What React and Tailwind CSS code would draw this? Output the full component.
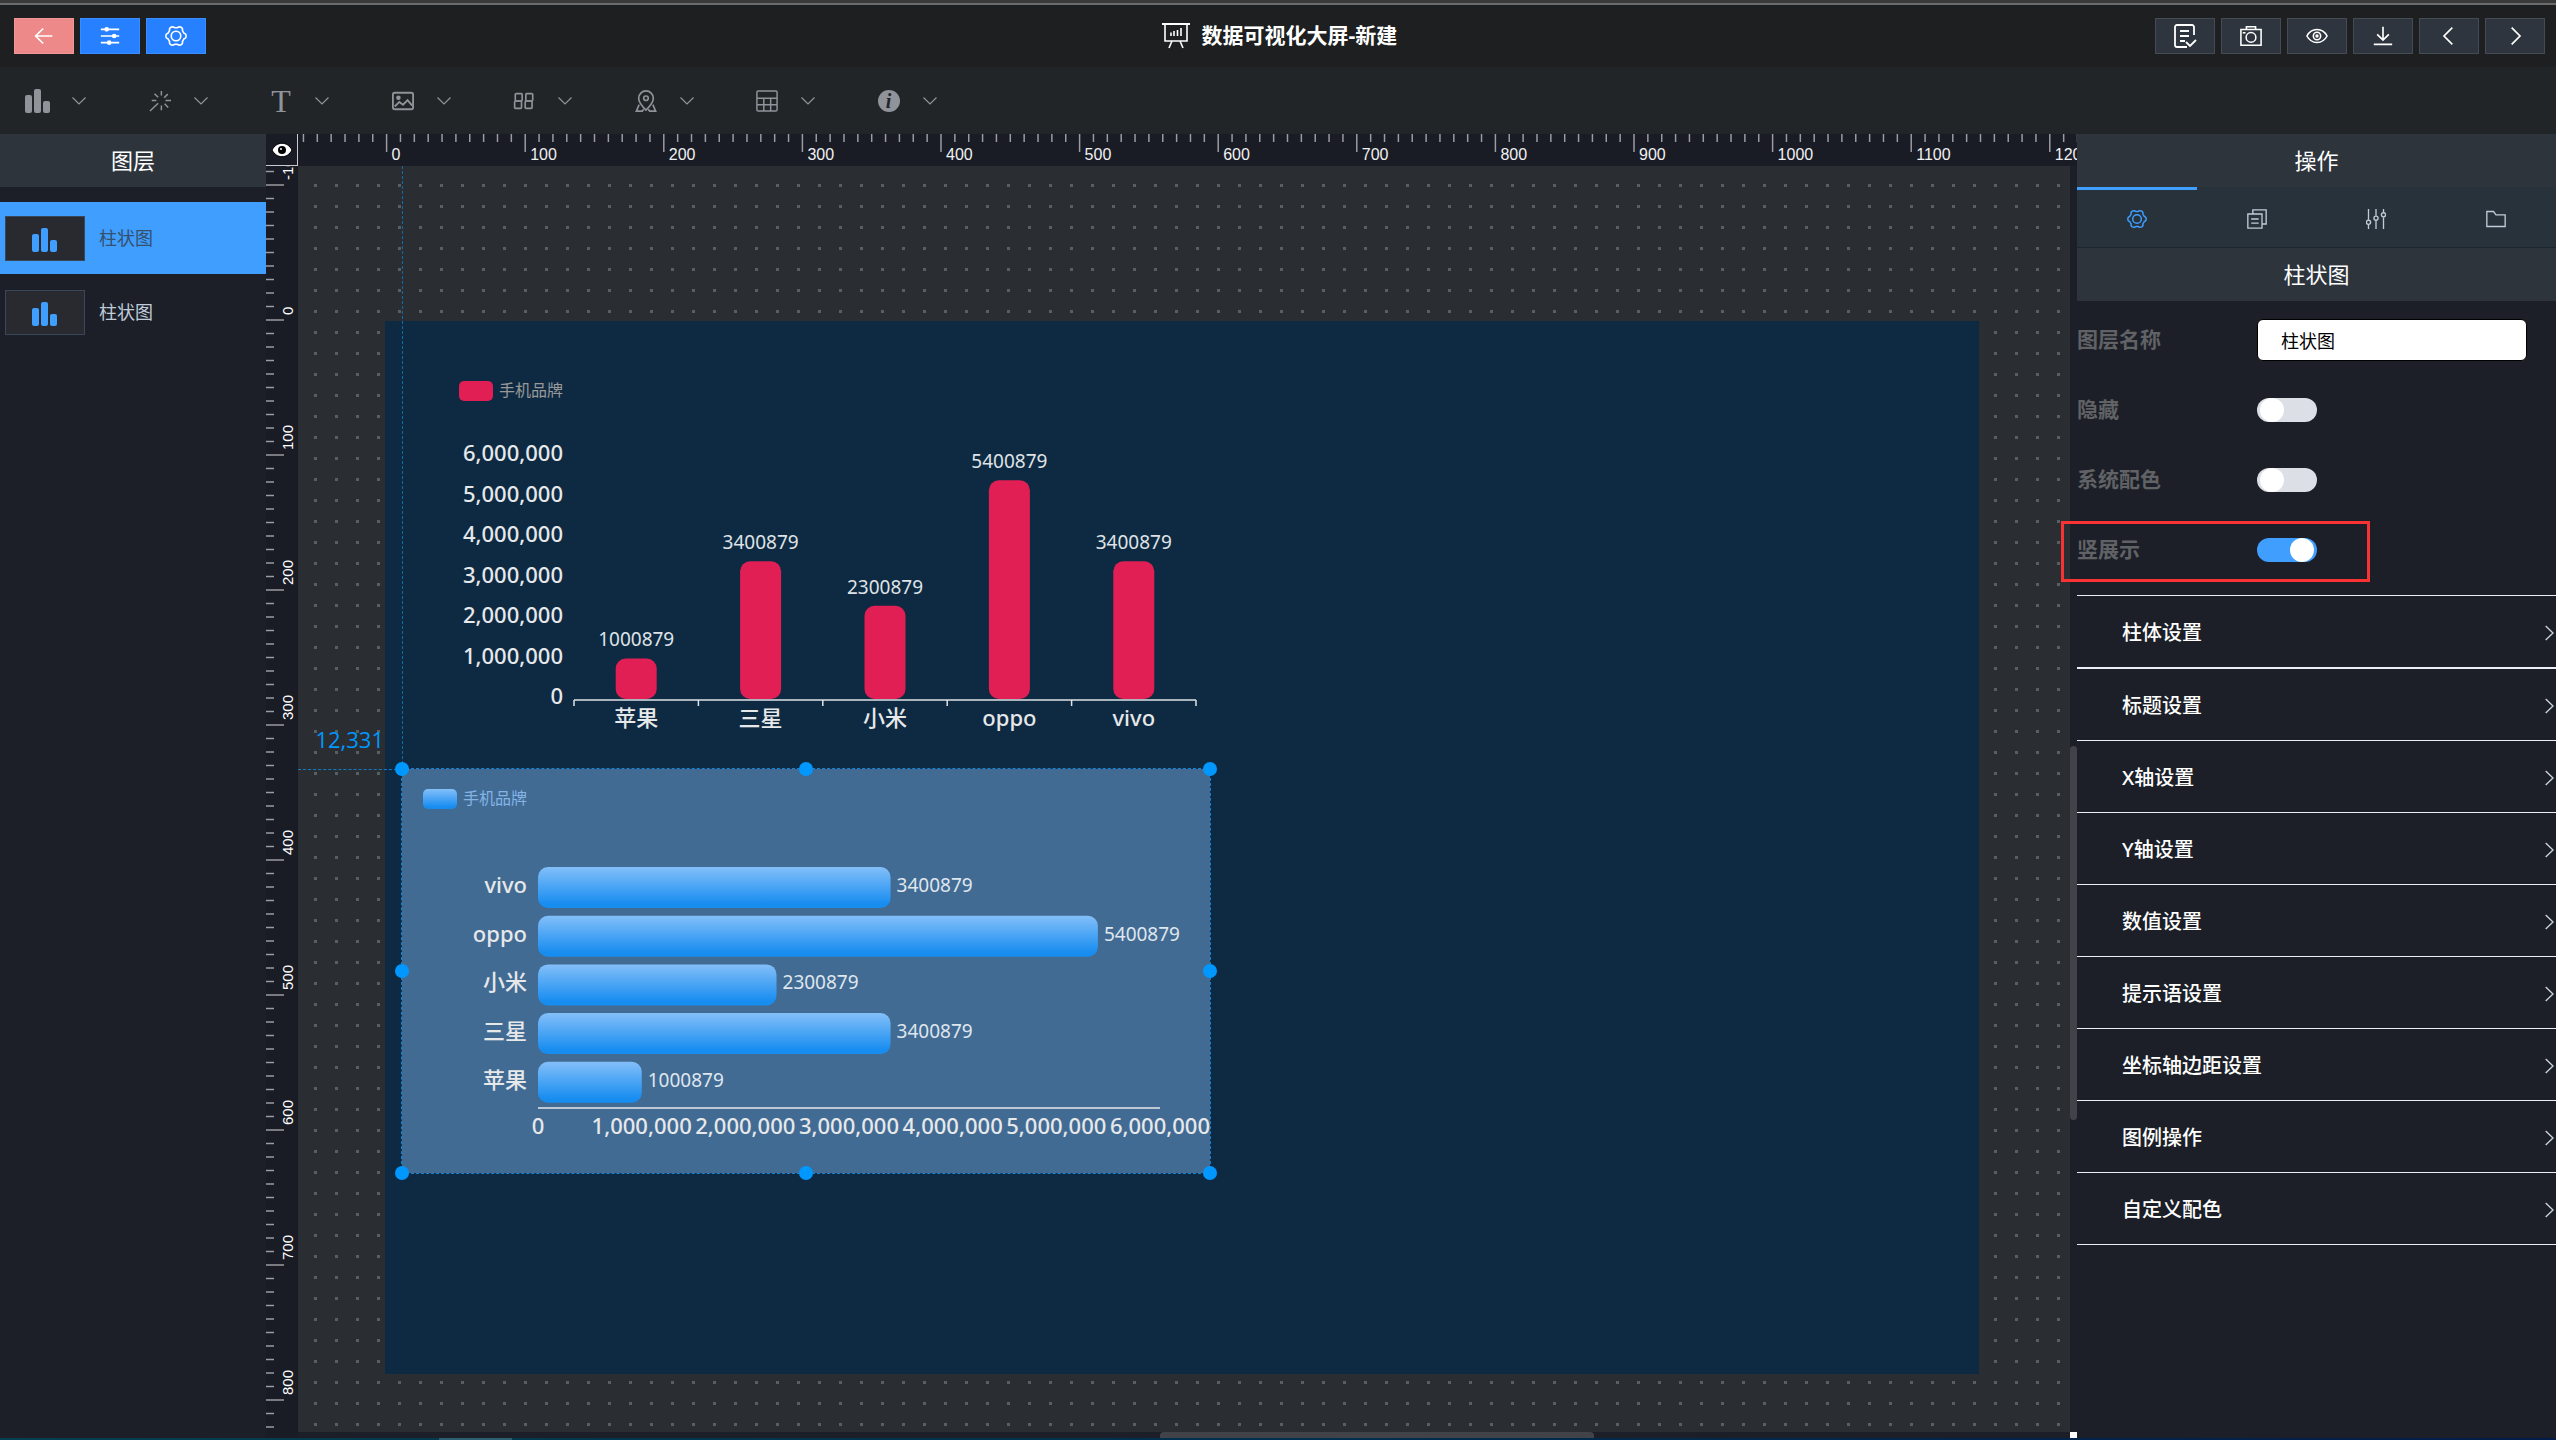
import React, { useState } from 'react';
import clsx from 'clsx';

const CHART_DATA = [
  { name: '苹果', value: 1000879 },
  { name: '三星', value: 3400879 },
  { name: '小米', value: 2300879 },
  { name: 'oppo', value: 5400879 },
  { name: 'vivo', value: 3400879 },
];
const AXIS_MAX = 6000000;
const AXIS_STEPS = [0, 1000000, 2000000, 3000000, 4000000, 5000000, 6000000];

const LAYERS = [
  { id: 'bar-h', name: '柱状图' },
  { id: 'bar-v', name: '柱状图' },
];

const SECTIONS = [
  '柱体设置',
  '标题设置',
  'X轴设置',
  'Y轴设置',
  '数值设置',
  '提示语设置',
  '坐标轴边距设置',
  '图例操作',
  '自定义配色',
];

// ---------- icons ----------

const Icon = ({ size = 22, width = 1.5, viewBox = '0 0 24 24', className, children }) => (
  <svg
    width={size}
    height={size}
    viewBox={viewBox}
    className={className}
    fill="none"
    stroke="currentColor"
    strokeWidth={width}
    aria-hidden="true"
  >
    {children}
  </svg>
);

// six flat teeth around the hub
const gearPath = (() => {
  const points = [];
  for (let i = 0; i < 96; i++) {
    const a = (i / 96) * Math.PI * 2;
    const r = 10 + Math.tanh(Math.cos(6 * a) * 1.8);
    points.push(`${(12 + r * Math.cos(a)).toFixed(2)} ${(12 + r * Math.sin(a)).toFixed(2)}`);
  }
  return `M${points.join('L')}Z`;
})();

const GearIcon = (props) => (
  <Icon {...props}>
    <path d={gearPath} />
    <circle cx="12" cy="12" r="5.2" />
  </Icon>
);

const BackIcon = () => (
  <Icon size={20} width={2}>
    <path d="M11 3 2 12l9 9M2 12h20" />
  </Icon>
);

const SlidersIcon = () => (
  <Icon size={20} width={2}>
    <path d="M1 4h22M1 12h22M1 20h22" />
    <g fill="currentColor" stroke="none">
      <circle cx="8" cy="4" r="2.8" />
      <circle cx="17" cy="12" r="2.8" />
      <circle cx="11" cy="20" r="2.8" />
    </g>
  </Icon>
);

const BoardIcon = () => (
  <Icon size={28} width={1.6} viewBox="0 0 28 28">
    <path d="M0 2h28" strokeWidth="2" />
    <path d="M3 2v17h22V2M10 19l-3 7M18 19l3 7" />
    <path d="M9 10.500V14M12 9v5M15.500 8v6M19 6v8" />
  </Icon>
);

const SaveIcon = () => (
  <Icon size={24} width={1.8}>
    <path d="M21 11V3a2 2 0 0 0-2-2H4a2 2 0 0 0-2 2v18a2 2 0 0 0 2 2h10" />
    <path d="M7 7h9M7 12h9M7 17h5M13 18l4 4 6-6" />
  </Icon>
);

const CameraIcon = () => (
  <Icon size={22} width={1.7}>
    <path d="M1 5h22v17H1zM7 5V2h10v3" />
    <circle cx="12" cy="13.5" r="5.3" />
    <path d="M3 8.500h3" />
  </Icon>
);

const EyeIcon = () => (
  <Icon size={22} width={1.7}>
    <path d="M1 12c2.500-4.700 6.300-7 11-7s8.500 2.300 11 7c-2.500 4.700-6.300 7-11 7s-8.500-2.300-11-7z" />
    <circle cx="12" cy="12" r="4" />
    <circle cx="12" cy="12" r="1" />
  </Icon>
);

const DownloadIcon = () => (
  <Icon size={20} width={2}>
    <path d="M12 1v15M5 10l7 7 7-7M1 22h22" />
  </Icon>
);

const PrevIcon = () => (
  <Icon size={20} width={2}>
    <path d="M16 2 6 12l10 10" />
  </Icon>
);

const NextIcon = () => (
  <Icon size={20} width={2}>
    <path d="m8 2 10 10L8 22" />
  </Icon>
);

const BarsIcon = ({ className }) => (
  <svg width="26" height="24" viewBox="0 0 26 24" fill="currentColor" className={className} aria-hidden="true">
    <rect x="0" y="6" width="7" height="18" rx="2" />
    <rect x="9" y="0" width="7" height="24" rx="2" />
    <rect x="18" y="12" width="7" height="12" rx="2" />
  </svg>
);

const WandIcon = () => (
  <Icon size={22} width={1.6}>
    <path d="M1 23l9-8.500M13.500 1v5M13.500 17v5M3 11.500h5M18 11.500h6M6 4l4 4M20.500 4.500l-4 4M17 15l4 4" />
  </Icon>
);

const TextIcon = () => (
  <span className="font-['Liberation_Serif',serif] text-[32px] leading-none" aria-hidden="true">
    T
  </span>
);

const PictureIcon = () => (
  <Icon size={22} width={2}>
    <rect x="1" y="3" width="22" height="18" rx="2" />
    <circle cx="7" cy="8.500" r="1.500" fill="currentColor" />
    <path d="m3 18 5-5 4 3 5-5 5 6" />
  </Icon>
);

const DigitsIcon = () => (
  <Icon size={22} width={1.8}>
    <rect x="2.500" y="4" width="7.500" height="8" rx="1" />
    <rect x="1.800" y="12" width="7.500" height="8" rx="1" />
    <rect x="14" y="4" width="7.500" height="8" rx="1" />
    <rect x="13.300" y="12" width="7.500" height="8" rx="1" />
  </Icon>
);

const MapIcon = () => (
  <Icon size={22} width={1.8}>
    <path d="M12 22C6.500 16.500 4 13 4 9a8 8 0 0 1 16 0c0 4-2.500 7.500-8 13z" />
    <circle cx="12" cy="9" r="2.500" />
    <path d="M4.500 16 1.500 23H8l1.500-2M19.500 16l3 7H16l-1.500-2" />
  </Icon>
);

const TableIcon = () => (
  <Icon size={22} width={1.6}>
    <rect x="1" y="1" width="22" height="22" rx="1.500" />
    <path d="M1 9h22M1 16h22M8.500 9v14M16 9v14" />
  </Icon>
);

const InfoIcon = () => (
  <span
    className="flex size-[22px] items-center justify-center rounded-full bg-[#909399] font-['Liberation_Serif',serif] text-xl leading-none font-bold text-[#222528] italic"
    aria-hidden="true"
  >
    i
  </span>
);

const DownIcon = () => (
  <svg width="14" height="8" viewBox="0 0 14 8" fill="none" stroke="currentColor" strokeWidth="1.200" aria-hidden="true">
    <path d="m.5.5 6.500 6.500 6.500-6.500" />
  </svg>
);

const CopyIcon = () => (
  <Icon size={20} width={1.6}>
    <path d="M1 6h17v17H1zM7 6V1h16v17h-5M5 12h9M5 17h9" />
  </Icon>
);

const TuneIcon = () => (
  <Icon size={20} width={1.6}>
    <path d="M3 0v13M3 18v6M12 0v8M12 14v10M21 0v4M21 10v14" />
    <circle cx="3" cy="16" r="2.500" />
    <circle cx="12" cy="11" r="2.500" />
    <circle cx="21" cy="7" r="2.500" />
  </Icon>
);

const FolderIcon = () => (
  <Icon size={20} width={1.6}>
    <path d="M1 3h8l3 4h11v14H1z" />
  </Icon>
);

const RulerEyeIcon = () => (
  <svg width="22" height="16" viewBox="0 0 22 16" aria-hidden="true">
    <path d="M1 8c2.500-4.500 5.800-6.700 10-6.700S18.500 3.500 21 8c-2.500 4.500-5.800 6.700-10 6.700S3.500 12.500 1 8z" fill="#fff" stroke="#000" />
    <circle cx="11" cy="8" r="4" fill="#000" />
    <circle cx="10" cy="7" r="1" fill="#fff" />
  </svg>
);

// ---------- top bars ----------

const HeaderButton = ({ label, className, children }) => (
  <button
    type="button"
    aria-label={label}
    className={clsx('flex h-9 w-[60px] items-center justify-center border text-white', className)}
  >
    {children}
  </button>
);

const Header = () => {
  const blue = 'bg-[#2680ff] border-[#3a8cff]';
  const dark = 'bg-[#2e353f] border-[#454a54]';

  return (
    <header className="grid h-[62px] shrink-0 grid-cols-[1fr_auto_1fr] items-center bg-[#1e1f20] pr-[11px] pl-3.5">
      <div className="flex gap-1.5">
        <HeaderButton label="返回" className="border-[#f19696] bg-[#ed8a89]"><BackIcon /></HeaderButton>
        <HeaderButton label="图层" className={blue}><SlidersIcon /></HeaderButton>
        <HeaderButton label="设置" className={blue}><GearIcon width={1.8} /></HeaderButton>
      </div>
      <h1 className="flex items-center gap-3 text-[21px] font-bold text-white">
        <BoardIcon />
        数据可视化大屏-新建
      </h1>
      <div className="flex justify-end gap-1.5">
        <HeaderButton label="保存" className={dark}><SaveIcon /></HeaderButton>
        <HeaderButton label="截图" className={dark}><CameraIcon /></HeaderButton>
        <HeaderButton label="预览" className={dark}><EyeIcon /></HeaderButton>
        <HeaderButton label="导出" className={dark}><DownloadIcon /></HeaderButton>
        <HeaderButton label="撤销" className={dark}><PrevIcon /></HeaderButton>
        <HeaderButton label="恢复" className={dark}><NextIcon /></HeaderButton>
      </div>
    </header>
  );
};

const TOOLS = [
  { label: '图表', icon: BarsIcon },
  { label: '装饰', icon: WandIcon },
  { label: '文本', icon: TextIcon },
  { label: '图片', icon: PictureIcon },
  { label: '数字', icon: DigitsIcon },
  { label: '地图', icon: MapIcon },
  { label: '表格', icon: TableIcon },
  { label: '信息', icon: InfoIcon },
];

const Toolbar = () => (
  <nav className="h-[67px] shrink-0 bg-[#222528] text-[#909399]">
    <div className="grid h-full w-[972px] grid-cols-8">
      {TOOLS.map(({ label, icon: ToolIcon }) => (
        <button key={label} type="button" aria-label={label} className="flex items-center gap-5 pl-6">
          <span className="flex w-7 justify-center"><ToolIcon /></span>
          <DownIcon />
        </button>
      ))}
    </div>
  </nav>
);

// ---------- left panel ----------

const PanelTitle = ({ children }) => (
  <h2 className="flex h-[53px] shrink-0 items-center justify-center bg-[#2d343c] text-[22px] text-white">
    {children}
  </h2>
);

const LayerPanel = ({ active, onSelect }) => (
  <aside className="w-[266px] shrink-0 bg-[#1c1f27]">
    <PanelTitle>图层</PanelTitle>
    <ul className="mt-[15px] flex flex-col gap-0.5">
      {LAYERS.map((layer) => (
        <li key={layer.id}>
          <button
            type="button"
            onClick={() => onSelect(layer.id)}
            className={clsx(
              'flex h-[72px] w-full items-center gap-3.5 pl-[5px] text-lg',
              active === layer.id ? 'bg-[#409eff] text-[#34506e]' : 'text-[#bfcbd9]'
            )}
          >
            <span className="flex h-[45px] w-20 items-center justify-center border border-[#3a4659] bg-[#282a30] text-[#409eff]">
              <BarsIcon className="mt-1" />
            </span>
            {layer.name}
          </button>
        </li>
      ))}
    </ul>
  </aside>
);

// ---------- rulers ----------

const range = (from, to) => Array.from({ length: to - from + 1 }, (_, i) => from + i);

const TopRuler = () => (
  <svg className="h-8 min-w-0 flex-1 bg-[#191b25] font-['Liberation_Sans',sans-serif]" aria-hidden="true">
    {range(-6, 122).map((n) => {
      const x = 88.6 + n * 13.86;
      const major = n % 10 === 0;
      return (
        <g key={n}>
          <line x1={x} x2={x} y1="0" y2={major ? 18 : 8} stroke="#9a9ca1" strokeWidth="1.500" />
          {major && (
            <text x={x + 5} y="26" fontSize="16" fill="#f0f1f2">
              {n * 10}
            </text>
          )}
        </g>
      );
    })}
  </svg>
);

const SideRuler = () => (
  <svg className="h-full w-8 shrink-0 bg-[#191b25] font-['Liberation_Sans',sans-serif]" aria-hidden="true">
    {range(-11, 82).map((n) => {
      const y = 154 + n * 13.5;
      const major = n % 10 === 0;
      return (
        <g key={n}>
          <line x1="0" x2={major ? 18 : 8} y1={y} y2={y} stroke="#9a9ca1" strokeWidth="1.500" />
          {major && (
            <text transform={`translate(27 ${y - 5}) rotate(-90)`} fontSize="15" fill="#fff">
              {n * 10}
            </text>
          )}
        </g>
      );
    })}
  </svg>
);

// ---------- charts ----------

const CHART_FONT = "font-['Noto_Sans','Noto_Sans_CJK_SC',sans-serif]";
const LEFT = 136;
const RIGHT = 758;
const BASE = 338;

const ColumnChart = () => {
  const step = (RIGHT - LEFT) / CHART_DATA.length;
  const height = (v) => (v / AXIS_MAX) * 243;

  return (
    <svg width="808" height="404" className={CHART_FONT}>
      <rect x="21" y="20" width="34" height="20" rx="5" fill="#e11f54" />
      <text x="61" y="35" fontSize="16" fill="#999">手机品牌</text>
      {AXIS_STEPS.map((v) => (
        <text key={v} x="125" y={BASE - height(v) + 5} fontSize="22" fontWeight="500" textAnchor="end" fill="#e6e8ea">
          {v.toLocaleString('en-US')}
        </text>
      ))}
      {CHART_DATA.map((d, i) => {
        const x = LEFT + step * (i + 0.5);
        const h = height(d.value);
        return (
          <g key={d.name} textAnchor="middle">
            <rect x={x - 20.5} y={BASE - h} width="41" height={h} rx="10" fill="#e11f54" />
            <text x={x} y={BASE - h - 12} fontSize="19" fill="#dfe3e7">{d.value}</text>
            <text x={x} y={BASE + 27} fontSize="22" fontWeight="500" fill="#e6e8ea">{d.name}</text>
          </g>
        );
      })}
      <g stroke="#dfe3e7" strokeWidth="1.500">
        <line x1={LEFT} x2={RIGHT} y1={BASE + 1} y2={BASE + 1} />
        {range(0, CHART_DATA.length).map((i) => (
          <line key={i} x1={LEFT + i * step} x2={LEFT + i * step} y1={BASE + 1} y2={BASE + 7} />
        ))}
      </g>
    </svg>
  );
};

const BarChart = () => {
  const step = 48.7;
  const width = (v) => (v / AXIS_MAX) * (RIGHT - LEFT);
  const rows = [...CHART_DATA].reverse();

  return (
    <svg width="808" height="404" className={CHART_FONT}>
      <defs>
        <linearGradient id="barFill" x1="0" y1="0" x2="0" y2="1">
          <stop offset="0" stopColor="#83bff9" />
          <stop offset="0.900" stopColor="#188df0" />
        </linearGradient>
      </defs>
      <rect x="21" y="20" width="34" height="20" rx="5" fill="url(#barFill)" />
      <text x="61" y="35" fontSize="16" fill="#83b4e6">手机品牌</text>
      {rows.map((d, i) => {
        const y = 98 + step * i;
        return (
          <g key={d.name}>
            <rect x={LEFT} y={y} width={width(d.value)} height="41" rx="10" fill="url(#barFill)" />
            <text x="125" y={y + 26} fontSize="22" fontWeight="500" textAnchor="end" fill="#e6e8ea">{d.name}</text>
            <text x={LEFT + width(d.value) + 6} y={y + 25} fontSize="19" fill="#dfe6ee">{d.value}</text>
          </g>
        );
      })}
      <line x1={LEFT} x2={RIGHT} y1={BASE + 1} y2={BASE + 1} stroke="#e6e8ea" strokeWidth="1.500" />
      {AXIS_STEPS.map((v) => (
        <text key={v} x={LEFT + width(v)} y="365" fontSize="22" fontWeight="500" textAnchor="middle" fill="#e6e8ea">
          {v.toLocaleString('en-US')}
        </text>
      ))}
    </svg>
  );
};

// ---------- stage ----------

const HANDLES = [
  'left-0 top-0',
  'left-1/2 top-0',
  'left-full top-0',
  'left-0 top-1/2',
  'left-full top-1/2',
  'left-0 top-full',
  'left-1/2 top-full',
  'left-full top-full',
];

const Stage = () => (
  <div className="absolute top-[155px] left-[87px] h-[1053px] w-[1594px] bg-[#0e2a42]">
    <div className="absolute top-10 left-[53px]">
      <ColumnChart />
    </div>

    {/* selected widget with its guides */}
    <div className="absolute top-[448px] left-[17px] bg-[#426b94] outline-1 outline-[#1583d4] outline-dashed">
      <span className="absolute bottom-full left-0 h-[603px] border-l border-dashed border-[#0f6cab]" />
      <span className="absolute top-0 right-full w-[104px] border-t border-dashed border-[#0f7cc4]" />
      <span className="absolute right-full bottom-full mr-[18px] mb-3.5 font-['Open_Sans',sans-serif] text-[22px] leading-8 text-[#0098ff]">
        12,331
      </span>
      <BarChart />
      {HANDLES.map((pos) => (
        <span key={pos} className={clsx('absolute size-3.5 -translate-1/2 rounded-full bg-[#0098ff]', pos)} />
      ))}
    </div>
  </div>
);

const Workspace = () => (
  <main className="flex min-w-0 flex-1 flex-col bg-[#1c1f27]">
    <div className="flex h-8 shrink-0">
      <button
        type="button"
        aria-label="显示标尺"
        className="flex w-8 shrink-0 items-center justify-center border-r border-b border-[#c9cacd] bg-[#191b25]"
      >
        <RulerEyeIcon />
      </button>
      <TopRuler />
    </div>
    <div className="flex min-h-0 flex-1">
      <SideRuler />
      <div className="flex min-w-0 flex-1 flex-col">
        <div className="flex min-h-0 flex-1">
          <div className="relative min-w-0 flex-1 overflow-hidden bg-[#2a2d31] bg-[radial-gradient(#566064_1.500px,transparent_2px)] bg-[length:21px_21px] bg-[position:7px_9px]">
            <Stage />
          </div>
          <div className="w-[7px] shrink-0 pt-[580px]">
            <div className="h-[374px] rounded-full bg-[#414349]" />
          </div>
        </div>
        <div className="flex h-1.5 shrink-0 justify-between pl-[862px]">
          <div className="w-[434px] rounded-t bg-[#414349]" />
          <div className="w-[7px] bg-white" />
        </div>
      </div>
    </div>
  </main>
);

// ---------- right panel ----------

const TABS = [
  { label: '基础', icon: () => <GearIcon size={20} width={1.8} /> },
  { label: '数据', icon: CopyIcon },
  { label: '交互', icon: TuneIcon },
  { label: '资源', icon: FolderIcon },
];

const FormRow = ({ id, label, children }) => (
  <div className="relative flex h-[42px] items-center">
    <label htmlFor={id} className="w-[180px] shrink-0 text-[21px] font-bold text-[#606266]">
      {label}
    </label>
    {children}
  </div>
);

const Toggle = ({ id, checked, onChange }) => (
  <input
    id={id}
    type="checkbox"
    role="switch"
    checked={checked}
    onChange={(e) => onChange(e.target.checked)}
    className="h-6 w-[60px] appearance-none rounded-full bg-[#dcdfe6] before:ml-[3px] before:block before:size-6 before:rounded-full before:bg-white checked:bg-[#409eff] checked:before:ml-[33px]"
  />
);

const SettingsPanel = () => {
  const [tab, setTab] = useState(0);
  const [name, setName] = useState('柱状图');
  const [hidden, setHidden] = useState(false);
  const [systemColor, setSystemColor] = useState(false);
  const [vertical, setVertical] = useState(true);

  return (
    <aside className="flex w-[479px] shrink-0 flex-col bg-[#1c1f27]">
      <PanelTitle>操作</PanelTitle>
      <div role="tablist" className="grid h-[61px] shrink-0 grid-cols-4 border-b border-[#1c2630] bg-[#28323b]">
        {TABS.map(({ label, icon: TabIcon }, i) => (
          <button
            key={label}
            type="button"
            role="tab"
            aria-label={label}
            aria-selected={tab === i}
            onClick={() => setTab(i)}
            className={clsx(
              'flex items-center justify-center border-t-3',
              tab === i ? 'border-[#409eff] text-[#409eff]' : 'border-transparent text-[#bfcbd9]'
            )}
          >
            <TabIcon />
          </button>
        ))}
      </div>
      <PanelTitle>柱状图</PanelTitle>

      <form className="flex flex-col gap-7 pt-[18px] pb-6">
        <FormRow id="layerName" label="图层名称">
          <input
            id="layerName"
            type="text"
            value={name}
            onChange={(e) => setName(e.target.value)}
            className="mr-[29px] h-[42px] min-w-0 flex-1 rounded-md border border-black bg-white px-[23px] text-lg text-black"
          />
        </FormRow>
        <FormRow id="hidden" label="隐藏">
          <Toggle id="hidden" checked={hidden} onChange={setHidden} />
        </FormRow>
        <FormRow id="systemColor" label="系统配色">
          <Toggle id="systemColor" checked={systemColor} onChange={setSystemColor} />
        </FormRow>
        <FormRow id="vertical" label="竖展示">
          <Toggle id="vertical" checked={vertical} onChange={setVertical} />
          <span className="pointer-events-none absolute -top-2 -left-4 z-10 h-[61px] w-[309px] border-3 border-[#f93234]" />
        </FormRow>
      </form>

      <ul className="text-white">
        {SECTIONS.map((title, i) => (
          <li key={title} className={clsx('border-b border-[#ebeef5]', i < 2 && 'border-t')}>
            <button
              type="button"
              className="flex h-[71px] w-full items-center justify-between pt-0.5 pr-0.5 pl-[45px] font-['Noto_Sans','Noto_Sans_CJK_SC',sans-serif] text-xl font-medium"
            >
              {title}
              <svg width="9" height="16" viewBox="0 0 9 16" fill="none" stroke="#c8d0da" strokeWidth="1.400" aria-hidden="true">
                <path d="m.7 1 7.300 7-7.300 7" />
              </svg>
            </button>
          </li>
        ))}
      </ul>
    </aside>
  );
};

function App() {
  const [layer, setLayer] = useState('bar-h');

  return (
    <div className="flex h-screen flex-col overflow-hidden bg-[#1c1f27] font-['Open_Sans','Noto_Sans_CJK_SC',sans-serif]">
      <div className="h-[5px] shrink-0 border-b-2 border-[#6b6b6b] bg-[#3a3a3a]" />
      <Header />
      <Toolbar />
      <div className="flex min-h-0 flex-1">
        <LayerPanel active={layer} onSelect={setLayer} />
        <Workspace />
        <SettingsPanel />
      </div>
      <div className="h-0.5 shrink-0 bg-linear-to-r from-[#04404f] to-[#001c4a] pl-[439px]">
        <div className="h-full w-[73px] bg-[#2c6070]" />
      </div>
    </div>
  );
}

export default App;
